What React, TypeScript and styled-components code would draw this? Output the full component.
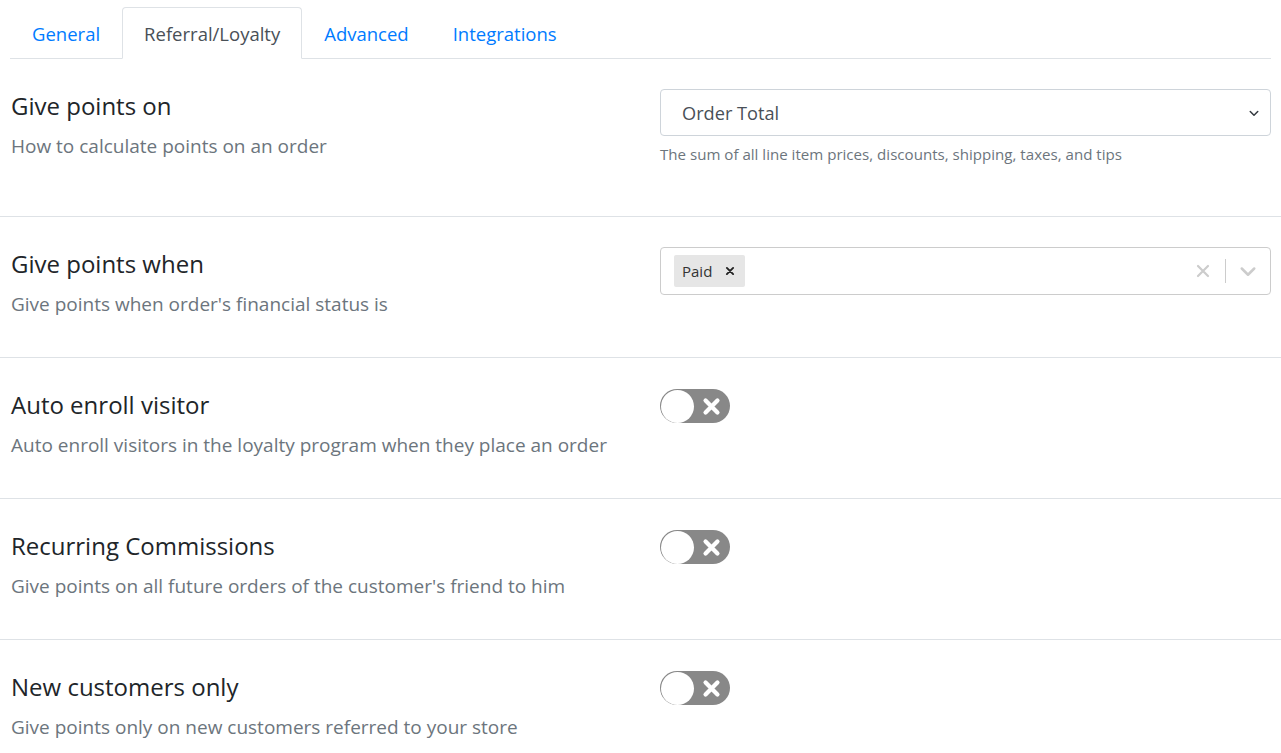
import React from "react";
import styled, { createGlobalStyle } from "styled-components";

const Global = createGlobalStyle`
  html, body { margin: 0; padding: 0; background: #fff; }
  body { font-family: "Open Sans", "Noto Sans", Arial, sans-serif; color: #212529; }
  * { box-sizing: border-box; }
`;

const Page = styled.div`
  width: 1281px;
  padding-top: 7px;
`;

const Tabs = styled.div`
  display: flex;
  margin: 0 10px 0 10px;
  border-bottom: 1px solid #dee2e6;
`;

const Tab = styled.div<{ $active?: boolean }>`
  height: 52px;
  padding: 0 21px;
  display: flex;
  align-items: center;
  font-size: 18.5px;
  margin-bottom: -1px;
  border: 1px solid ${(p) => (p.$active ? "#dee2e6" : "transparent")};
  border-bottom-color: ${(p) => (p.$active ? "#fff" : "transparent")};
  border-radius: 4px 4px 0 0;
  background: ${(p) => (p.$active ? "#fff" : "transparent")};
  color: ${(p) => (p.$active ? "#495057" : "#007bff")};
`;

const Row = styled.div<{ $first?: boolean }>`
  display: grid;
  grid-template-columns: 1fr 611px;
  column-gap: 10px;
  padding: 30px 10px 0 11px;
  height: ${(p) => (p.$first ? "158px" : "141px")};
  border-bottom: 1px solid #dee2e6;
`;

const Label = styled.div`
  display: flex;
  flex-direction: column;
`;

const Title = styled.div`
  font-size: 24px;
  line-height: 34px;
  color: #212529;
`;

const Desc = styled.div`
  margin-top: 10px;
  font-size: 19px;
  line-height: 26px;
  color: #6c757d;
`;

const Control = styled.div`
  display: flex;
  flex-direction: column;
  align-items: flex-start;
`;

const SelectBox = styled.div`
  width: 100%;
  height: 47px;
  border: 1px solid #ced4da;
  border-radius: 4px;
  display: flex;
  align-items: center;
  justify-content: space-between;
  padding: 0 10px 0 21px;
  font-size: 18.2px;
  color: #495057;
`;

const Help = styled.div`
  margin-top: 8px;
  font-size: 15.1px;
  line-height: 21px;
  color: #6c757d;
`;

const Multi = styled.div`
  width: 100%;
  height: 48px;
  border: 1px solid #cccccc;
  border-radius: 4px;
  display: flex;
  align-items: center;
  padding: 0 0 0 13px;
`;

const Chip = styled.div`
  height: 32px;
  background: #e6e6e6;
  border-radius: 2px;
  display: flex;
  align-items: center;
  padding: 0 10px 0 8px;
  gap: 13px;
  font-size: 15px;
  color: #333;
`;

const Spacer = styled.div`
  flex: 1;
`;

const Indicator = styled.div`
  width: 44px;
  height: 100%;
  display: flex;
  align-items: center;
  justify-content: center;
  color: #cccccc;
`;

const Sep = styled.div`
  width: 1px;
  height: 24px;
  background: #cccccc;
`;

const Toggle = styled.div`
  width: 70px;
  height: 34px;
  border-radius: 17px;
  background: #888888;
  display: flex;
  align-items: center;
  justify-content: space-between;
  padding: 0 9px 0 1px;
  margin-top: 1px;
`;

const Knob = styled.div`
  width: 33px;
  height: 33px;
  border-radius: 50%;
  background: #fff;
`;

const Chevron = ({ color = "#343a40", size = 12 }: { color?: string; size?: number }) => (
  <svg width={size} height={size} viewBox="0 0 16 16">
    <path d="M3 6l5 5 5-5" fill="none" stroke={color} strokeWidth="2" strokeLinecap="round" strokeLinejoin="round" />
  </svg>
);

const Cross = ({ color, size, w }: { color: string; size: number; w: number }) => (
  <svg width={size} height={size} viewBox="0 0 16 16">
    <path d="M3 3l10 10M13 3L3 13" stroke={color} strokeWidth={w} strokeLinecap="round" />
  </svg>
);

const ToggleSwitch = () => (
  <Toggle>
    <Knob />
    <Cross color="#fff" size={19} w={3.6} />
  </Toggle>
);

const rows = [
  { t: "Auto enroll visitor", d: "Auto enroll visitors in the loyalty program when they place an order" },
  { t: "Recurring Commissions", d: "Give points on all future orders of the customer's friend to him" },
  { t: "New customers only", d: "Give points only on new customers referred to your store" },
];

export default function App() {
  return (
    <Page>
      <Global />
      <Tabs>
        <Tab>General</Tab>
        <Tab $active>Referral/Loyalty</Tab>
        <Tab>Advanced</Tab>
        <Tab>Integrations</Tab>
      </Tabs>
      <Row $first>
        <Label>
          <Title>Give points on</Title>
          <Desc>How to calculate points on an order</Desc>
        </Label>
        <Control>
          <SelectBox>
            <span>Order Total</span>
            <Chevron />
          </SelectBox>
          <Help>The sum of all line item prices, discounts, shipping, taxes, and tips</Help>
        </Control>
      </Row>
      <Row>
        <Label>
          <Title>Give points when</Title>
          <Desc>Give points when order's financial status is</Desc>
        </Label>
        <Control>
          <Multi>
            <Chip>
              <span>Paid</span>
              <Cross color="#222" size={10} w={3} />
            </Chip>
            <Spacer />
            <Indicator>
              <Cross color="#cccccc" size={16} w={2.2} />
            </Indicator>
            <Sep />
            <Indicator>
              <Chevron color="#cccccc" size={20} />
            </Indicator>
          </Multi>
        </Control>
      </Row>
      {rows.map((r) => (
        <Row key={r.t}>
          <Label>
            <Title>{r.t}</Title>
            <Desc>{r.d}</Desc>
          </Label>
          <Control>
            <ToggleSwitch />
          </Control>
        </Row>
      ))}
    </Page>
  );
}
